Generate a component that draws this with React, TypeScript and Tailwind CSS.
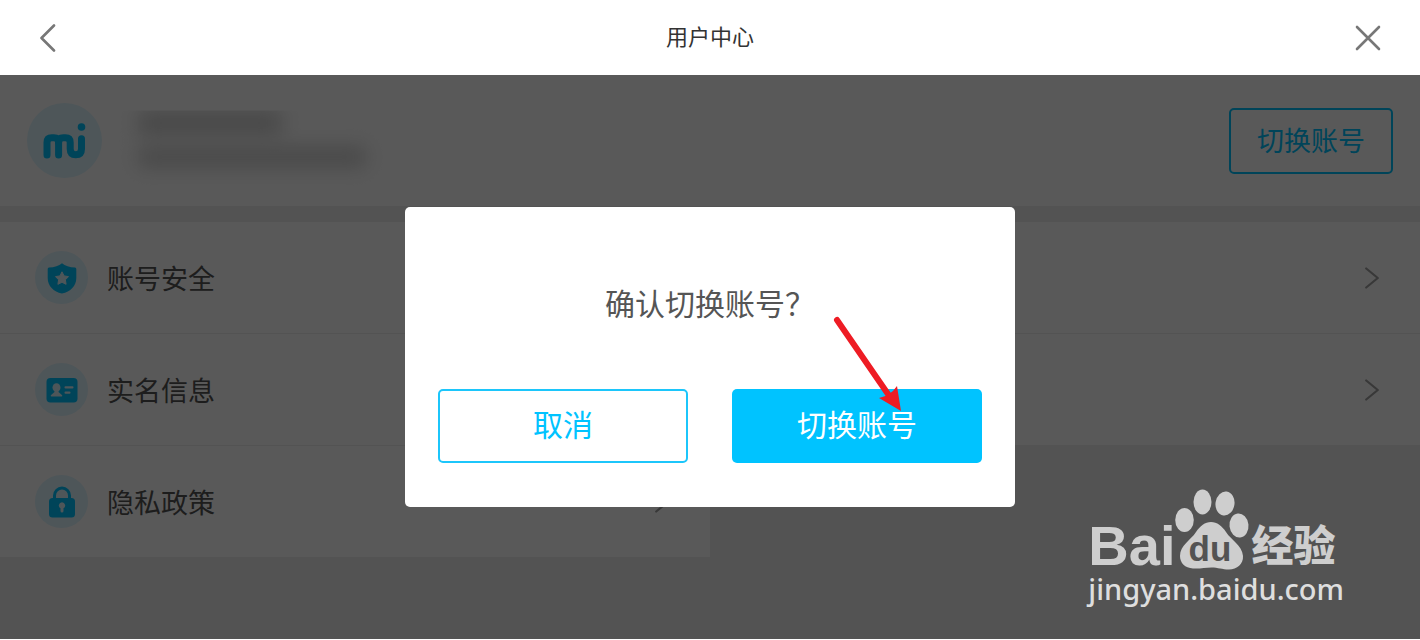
import type { ReactNode } from 'react'

function MiLogo() {
  return (
    <svg
      viewBox="0 0 75 75"
      className="h-[75px] w-[75px] shrink-0 rounded-full bg-[#def6ff]"
      fill="none"
      stroke="#00c3ff"
      strokeWidth="7"
      strokeLinecap="round"
      strokeLinejoin="round"
      aria-hidden="true"
    >
      <path d="M20 52V39.5Q20 34.8 24.8 34.8H26.8Q31.6 34.8 31.6 39.5V52" />
      <path d="M31.6 39.5Q31.6 34.8 36.4 34.8H38.4Q43.2 34.8 43.2 39.5V46Q43.2 51.8 48.8 51.8Q54.5 51.8 54.5 46V35.8" />
      <circle cx="54.5" cy="24" r="3.8" fill="#00c3ff" stroke="none" />
    </svg>
  )
}

function ShieldIcon() {
  return (
    <svg viewBox="0 0 32 32" className="h-8 w-8" aria-hidden="true">
      <path
        d="M16 1.2C19 3.8 23.5 5.2 29 5.6Q30.3 5.8 30.3 7V16C30.3 24 24.5 29.6 16 31.6C7.5 29.6 1.7 24 1.7 16V7Q1.7 5.8 3 5.6C8.5 5.2 13 3.8 16 1.2Z"
        fill="#00c3ff"
      />
      <path
        d="M16 9.8L18.1 13.9L22.5 14.6L19.4 17.8L20.1 22.3L16 20.3L11.9 22.3L12.6 17.8L9.5 14.6L13.9 13.9Z"
        fill="#def6ff"
        stroke="#def6ff"
        strokeLinejoin="round"
      />
    </svg>
  )
}

function CardIcon() {
  return (
    <svg viewBox="0 0 32 32" className="h-8 w-8" aria-hidden="true">
      <rect x="0.5" y="4" width="31" height="24.5" rx="4" fill="#00c3ff" />
      <g fill="#def6ff">
        <ellipse cx="10.5" cy="13.5" rx="4" ry="4.3" />
        <path d="M8.5 16H12.5V18L16.2 21.2Q16.5 22.6 15.5 22.6H5.5Q4.5 22.6 4.8 21.2L8.5 18Z" />
        <rect x="18.5" y="12.3" width="9" height="2.3" rx="1" />
        <rect x="18.5" y="17.5" width="6" height="2.3" rx="1" />
      </g>
    </svg>
  )
}

function LockIcon() {
  return (
    <svg viewBox="0 0 32 32" className="h-8 w-8" aria-hidden="true">
      <path
        d="M8.5 14V9.5A7.5 7.5 0 0 1 23.5 9.5V14"
        fill="none"
        stroke="#00c3ff"
        strokeWidth="3"
      />
      <rect x="3" y="12" width="26" height="19.5" rx="3.5" fill="#00c3ff" />
      <path
        d="M16 16.3A3.2 3.2 0 0 1 17.5 22.3V25Q17.5 26.5 16 26.5Q14.5 26.5 14.5 25V22.3A3.2 3.2 0 0 1 16 16.3Z"
        fill="#def6ff"
      />
    </svg>
  )
}

function Chevron() {
  return (
    <svg
      viewBox="0 0 14 22"
      className="h-[22px] w-3.5"
      fill="none"
      stroke="#a0a0a0"
      strokeWidth="2.2"
      strokeLinecap="round"
      strokeLinejoin="round"
      aria-hidden="true"
    >
      <path d="M1.2 1.5L12.8 11L1.2 20.5" />
    </svg>
  )
}

type MenuItem = {
  label?: string
  icon?: ReactNode
}

const items: MenuItem[] = [
  { label: '账号安全', icon: <ShieldIcon /> },
  {},
  { label: '实名信息', icon: <CardIcon /> },
  {},
  { label: '隐私政策', icon: <LockIcon /> },
]

function Watermark() {
  return (
    <div className="absolute right-[76px] bottom-8 text-[#cecece]">
      <div className="flex items-end">
        <span className="font-['Liberation_Sans',sans-serif] text-[56px] leading-[50px] font-bold">
          Bai
        </span>
        <svg viewBox="0 0 78 84" className="-ml-0.5 h-[84px] w-[78px]" aria-label="du">
          <g fill="#cecece">
            <ellipse cx="11.5" cy="33" rx="9.3" ry="12" />
            <ellipse cx="29.5" cy="15" rx="9" ry="12.5" />
            <ellipse cx="52" cy="16.5" rx="9.5" ry="12" transform="rotate(8 52 16.5)" />
            <ellipse cx="66" cy="38.5" rx="9.5" ry="12" transform="rotate(-6 66 38.5)" />
            <path d="M38 35C44 35 49 39 53 45C58 53 69 58 70 69C70.5 77 64 82.5 56 82.5C49 82.5 45 80.5 38.5 80.5C32 80.5 27 82 20 81.5C12 81 7 76 7 69C7 58 18 53 23 45C27 39 32 35 38 35Z" />
          </g>
          <text
            x="37"
            y="74"
            textAnchor="middle"
            fill="#535353"
            fontFamily="Liberation Sans, sans-serif"
            fontSize="35"
            fontWeight="700"
          >
            du
          </text>
        </svg>
        <span className="font-['Noto_Sans_CJK_SC',sans-serif] text-[42px] leading-[56px] font-black">
          经验
        </span>
      </div>
      <p className="font-['Noto_Sans',sans-serif] text-[29px] leading-9 font-medium text-[#dedede]">
        jingyan.baidu.com
      </p>
    </div>
  )
}

function Arrow() {
  return (
    <svg
      viewBox="0 0 80 100"
      className="pointer-events-none absolute top-[108px] left-[427px] h-[100px] w-20"
      aria-hidden="true"
    >
      <path d="M5 5L58 82" stroke="#ee1c24" strokeWidth="6" strokeLinecap="round" />
      <path d="M69 96L47 83L55 80.5L61 76L65 71Z" fill="#ee1c24" />
    </svg>
  )
}

function ConfirmDialog() {
  return (
    <div
      role="dialog"
      aria-modal="true"
      aria-labelledby="confirm-title"
      className="relative w-full max-w-[610px] rounded-[5px] bg-white px-[33px] pt-[73px] pb-11"
    >
      <h2
        id="confirm-title"
        className="text-center text-[30px] leading-[44px] text-[#555]"
      >
        确认切换账号？
      </h2>
      <div className="mt-[65px] grid grid-cols-2 gap-11">
        <button
          type="button"
          className="h-[74px] rounded-[5px] border-2 border-[#1cc6fb] pb-1.5 text-[30px] text-[#00c3ff]"
        >
          取消
        </button>
        <button
          type="button"
          className="h-[74px] rounded-[5px] bg-[#00c3ff] pb-1.5 text-[30px] text-white"
        >
          切换账号
        </button>
      </div>
      <Arrow />
    </div>
  )
}

export default function App() {
  return (
    <div className="flex min-h-screen flex-col bg-white pb-px font-['Noto_Sans_CJK_SC',sans-serif]">
      <header className="grid h-[75px] grid-cols-[1fr_auto_1fr] items-center px-[39px]">
        <button type="button" aria-label="返回" className="justify-self-start">
          <svg
            viewBox="0 0 18 28"
            className="h-7 w-[18px]"
            fill="none"
            stroke="#777"
            strokeWidth="2.6"
            strokeLinecap="round"
            strokeLinejoin="round"
          >
            <path d="M15 1.5L2.5 14L15 26.5" />
          </svg>
        </button>
        <h1 className="pb-1 text-[22px] text-[#333]">用户中心</h1>
        <button type="button" aria-label="关闭" className="justify-self-end">
          <svg
            viewBox="0 0 26 26"
            className="h-[26px] w-[26px]"
            fill="none"
            stroke="#777"
            strokeWidth="2.6"
            strokeLinecap="round"
          >
            <path d="M2 2L24 24M24 2L2 24" />
          </svg>
        </button>
      </header>

      <main className="relative flex-1 bg-[#ededed] pb-16">
        <section className="flex h-[131px] items-center justify-between bg-white px-[27px]">
          <div className="flex items-center">
            <MiLogo />
            {/* account name and id are blurred out */}
            <div className="ml-3 h-[60px] w-[290px] px-6 [clip-path:inset(0_0_-30px_0)]">
              <div className="h-6 w-36 bg-[#cecece] blur-[10px]" />
              <div className="mt-3 h-5 w-[228px] bg-[#cecece] blur-[10px]" />
            </div>
          </div>
          <button
            type="button"
            className="h-[66px] w-[164px] rounded-[5px] border-2 border-[#00c3ff] text-[27px] text-[#00c3ff]"
          >
            切换账号
          </button>
        </section>

        <ul className="mt-4 grid grid-cols-2">
          {items.map((item, index) => (
            <li key={index} className="border-b border-[#ededed] bg-white">
              <button
                type="button"
                className="flex h-[111px] w-full items-center pr-[41px] pl-[35px]"
              >
                {item.icon && (
                  <span className="flex h-[53px] w-[53px] items-center justify-center rounded-full bg-[#def6ff]">
                    {item.icon}
                  </span>
                )}
                <span className="ml-[19px] flex-1 pt-0.5 text-left text-[27px] text-[#555]">
                  {item.label}
                </span>
                <Chevron />
              </button>
            </li>
          ))}
        </ul>

        <div className="absolute inset-0 flex items-center justify-center bg-black/65">
          <ConfirmDialog />
        </div>
        <Watermark />
      </main>
    </div>
  )
}
